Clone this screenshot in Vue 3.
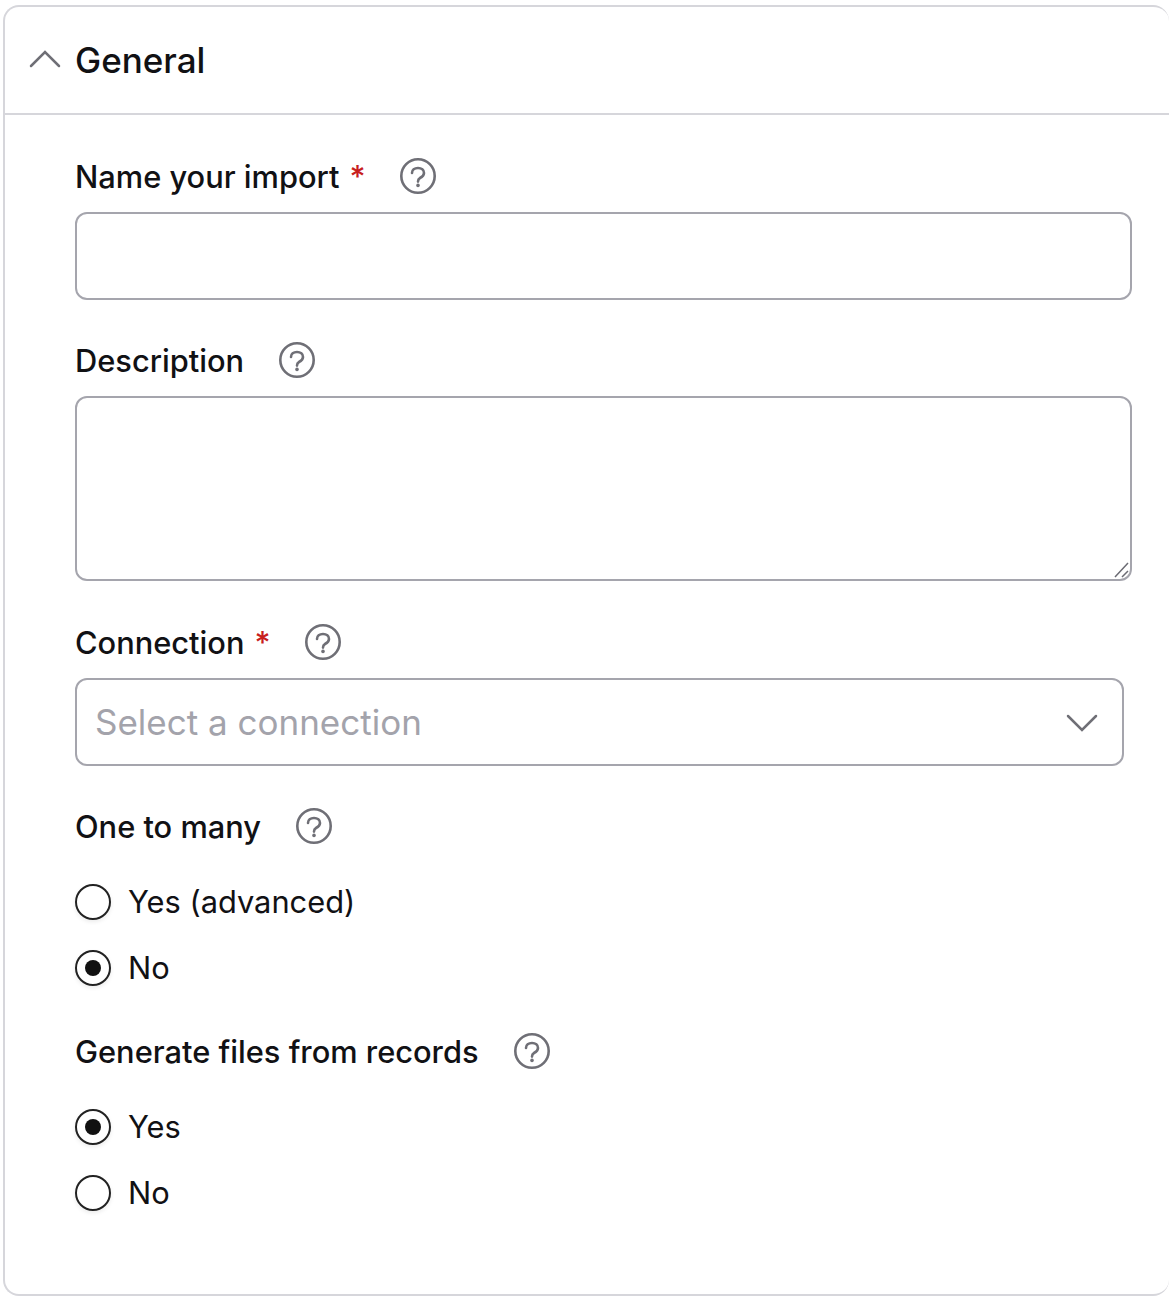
<template>
  <div class="panel">
    <div class="panel-head">
      <svg class="chev" width="32" height="20" viewBox="0 0 32 20" fill="none"><path d="M2 18 L16 4 L30 18" stroke="#6f6f76" stroke-width="2.5" stroke-linecap="round"/></svg>
      <span class="panel-title">General</span>
    </div>
    <div class="panel-body">
      <div class="label-row first">
        <label>Name your import</label><span class="req">*</span>
        <svg class="help" viewBox="0 0 36 36" fill="none"><circle cx="18" cy="18" r="16.7" stroke="#6f6f76" stroke-width="2.6"/><path d="M12 15c0-3 2.5-5 6-5s6 2 6 5c0 3-2 4-4 5-1.5.8-2 2-2 3.6" stroke="#6f6f76" stroke-width="2.6" stroke-linecap="round"/><circle cx="18" cy="27.4" r="1.8" fill="#6f6f76"/></svg>
      </div>
      <input class="text-input" type="text" />

      <div class="label-row second">
        <label>Description</label>
        <svg class="help" viewBox="0 0 36 36" fill="none"><circle cx="18" cy="18" r="16.7" stroke="#6f6f76" stroke-width="2.6"/><path d="M12 15c0-3 2.5-5 6-5s6 2 6 5c0 3-2 4-4 5-1.5.8-2 2-2 3.6" stroke="#6f6f76" stroke-width="2.6" stroke-linecap="round"/><circle cx="18" cy="27.4" r="1.8" fill="#6f6f76"/></svg>
      </div>
      <div class="area">
        <svg class="grip" width="16" height="16" viewBox="0 0 16 16" fill="none"><path d="M2 15 L15 1 M9 15 L15 9" stroke="#6b6b73" stroke-width="1.5"/></svg>
      </div>

      <div class="label-row third">
        <label>Connection</label><span class="req">*</span>
        <svg class="help" viewBox="0 0 36 36" fill="none"><circle cx="18" cy="18" r="16.7" stroke="#6f6f76" stroke-width="2.6"/><path d="M12 15c0-3 2.5-5 6-5s6 2 6 5c0 3-2 4-4 5-1.5.8-2 2-2 3.6" stroke="#6f6f76" stroke-width="2.6" stroke-linecap="round"/><circle cx="18" cy="27.4" r="1.8" fill="#6f6f76"/></svg>
      </div>
      <div class="select">
        <span>Select a connection</span>
        <svg width="32" height="20" viewBox="0 0 32 20" fill="none"><path d="M2 4 L16 18 L30 4" stroke="#6f6f76" stroke-width="2.5" stroke-linecap="round"/></svg>
      </div>

      <div class="label-row fourth">
        <label>One to many</label>
        <svg class="help" viewBox="0 0 36 36" fill="none"><circle cx="18" cy="18" r="16.7" stroke="#6f6f76" stroke-width="2.6"/><path d="M12 15c0-3 2.5-5 6-5s6 2 6 5c0 3-2 4-4 5-1.5.8-2 2-2 3.6" stroke="#6f6f76" stroke-width="2.6" stroke-linecap="round"/><circle cx="18" cy="27.4" r="1.8" fill="#6f6f76"/></svg>
      </div>
      <div class="radio-list">
        <div class="radio-row" v-for="o in oneToMany" :key="o.label">
          <span class="radio" :class="{ on: o.on }"></span>
          <span class="radio-text">{{ o.label }}</span>
        </div>
      </div>

      <div class="label-row fifth">
        <label>Generate files from records</label>
        <svg class="help" viewBox="0 0 36 36" fill="none"><circle cx="18" cy="18" r="16.7" stroke="#6f6f76" stroke-width="2.6"/><path d="M12 15c0-3 2.5-5 6-5s6 2 6 5c0 3-2 4-4 5-1.5.8-2 2-2 3.6" stroke="#6f6f76" stroke-width="2.6" stroke-linecap="round"/><circle cx="18" cy="27.4" r="1.8" fill="#6f6f76"/></svg>
      </div>
      <div class="radio-list">
        <div class="radio-row" v-for="o in generate" :key="o.label">
          <span class="radio" :class="{ on: o.on }"></span>
          <span class="radio-text">{{ o.label }}</span>
        </div>
      </div>
    </div>
  </div>
</template>

<script setup>
const oneToMany = [
  { label: 'Yes (advanced)', on: false },
  { label: 'No', on: true }
]
const generate = [
  { label: 'Yes', on: true },
  { label: 'No', on: false }
]
</script>

<style>
body { background: #fff; }
</style>

<style scoped>
.panel {
  box-sizing: border-box;
  width: 1166px;
  height: 1291px;
  margin: 5px 0 0 3px;
  border: 2px solid #d6d6db;
  border-right: 0;
  border-radius: 16px;
  font-family: Inter, "Liberation Sans", sans-serif;
  color: #111114;
}
.panel-head {
  display: flex;
  align-items: center;
  height: 106px;
  padding-left: 24px;
  border-bottom: 2px solid #d6d6db;
}
.chev { margin-right: 14px; margin-top: -5px; }
.panel-title { font-size: 35px; font-weight: 500; }
.panel-body { padding: 0 37px 0 70px; }
.label-row {
  display: flex;
  align-items: center;
  height: 36px;
  font-size: 30.8px;
  font-weight: 500;
}
.label-row.first { margin-top: 43px; margin-bottom: 18px; }
.label-row.second { margin-top: 42px; margin-bottom: 18px; }
.label-row.third { margin-top: 43px; margin-bottom: 18px; }
.label-row.fourth { margin-top: 42px; }
.label-row.fifth { margin-top: 47px; }
.req { color: #c81e1e; margin-left: 10px; }
.help { width: 36px; height: 36px; margin-left: 35px; }
.req + .help { margin-left: 34px; }
.text-input {
  display: block;
  box-sizing: border-box;
  width: 100%;
  height: 88px;
  border: 2px solid #a5a5ad;
  border-radius: 12px;
  background: #fff;
}
.area {
  position: relative;
  box-sizing: border-box;
  height: 185px;
  border: 2px solid #a5a5ad;
  border-radius: 12px;
}
.grip { position: absolute; right: 1px; bottom: 1px; }
.select {
  display: flex;
  align-items: center;
  justify-content: space-between;
  box-sizing: border-box;
  width: 1049px;
  height: 88px;
  padding: 0 24px 0 18px;
  border: 2px solid #a5a5ad;
  border-radius: 12px;
  font-size: 35px;
  color: #a3a3ab;
}
.radio-list { padding-top: 40px; }
.radio-row {
  display: flex;
  align-items: center;
  height: 36px;
  margin-bottom: 30px;
  font-size: 30.8px;
}
.radio-row:last-child { margin-bottom: 0; }
.radio-text { margin-top: -2px; }
.radio {
  box-sizing: border-box;
  width: 36px;
  height: 36px;
  margin-right: 17px;
  border: 2px solid #222;
  border-radius: 50%;
  display: flex;
  align-items: center;
  justify-content: center;
  box-shadow: 0 2px 4px rgba(0, 0, 0, 0.08);
}
.radio.on::after {
  content: "";
  width: 16px;
  height: 16px;
  border-radius: 50%;
  background: #111;
}
</style>
